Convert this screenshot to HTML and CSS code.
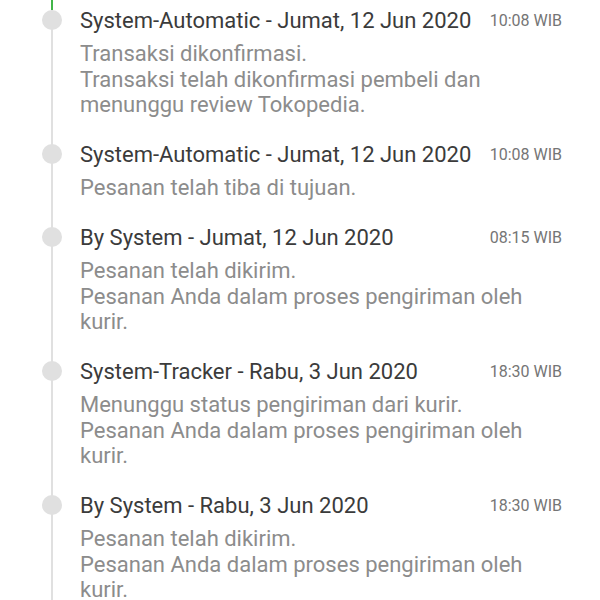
FILE: index.html
```html
<!DOCTYPE html>
<html lang="id">
<head>
  <meta charset="UTF-8">
  <meta name="viewport" content="width=device-width, initial-scale=1.0">
  <title>Riwayat Pesanan</title>
  <link rel="stylesheet" href="styles.css">
</head>
<body>

  <ul class="timeline">
    <li class="event first">
      <div class="event-head">
        <span class="event-title">System-Automatic - Jumat, 12 Jun 2020</span>
        <span class="event-time">10:08 WIB</span>
      </div>
      <p class="event-desc">Transaksi dikonfirmasi.<br>Transaksi telah dikonfirmasi pembeli dan menunggu review Tokopedia.</p>
    </li>
    <li class="event">
      <div class="event-head">
        <span class="event-title">System-Automatic - Jumat, 12 Jun 2020</span>
        <span class="event-time">10:08 WIB</span>
      </div>
      <p class="event-desc">Pesanan telah tiba di tujuan.</p>
    </li>
    <li class="event">
      <div class="event-head">
        <span class="event-title">By System - Jumat, 12 Jun 2020</span>
        <span class="event-time">08:15 WIB</span>
      </div>
      <p class="event-desc">Pesanan telah dikirim.<br>Pesanan Anda dalam proses pengiriman oleh kurir.</p>
    </li>
    <li class="event">
      <div class="event-head">
        <span class="event-title">System-Tracker - Rabu, 3 Jun 2020</span>
        <span class="event-time">18:30 WIB</span>
      </div>
      <p class="event-desc">Menunggu status pengiriman dari kurir.<br>Pesanan Anda dalam proses pengiriman oleh kurir.</p>
    </li>
    <li class="event">
      <div class="event-head">
        <span class="event-title">By System - Rabu, 3 Jun 2020</span>
        <span class="event-time">18:30 WIB</span>
      </div>
      <p class="event-desc">Pesanan telah dikirim.<br>Pesanan Anda dalam proses pengiriman oleh kurir.</p>
    </li>
  </ul>

</body>
</html>
```

FILE: styles.css
```css
body {
  margin: 0;
  padding: 0;
  font-family: Roboto, 'Noto Sans', sans-serif;
  background-color: #ffffff;
  color: #333333;
}
.timeline {
  list-style: none;
  margin: 0;
  padding: 7px 38px 0 0;
}
.event {
  position: relative;
  padding: 0 0 23.5px 80px;
}
/* rail line */
.event::before {
  content: "";
  position: absolute;
  left: 51px;
  top: 0;
  bottom: 0;
  width: 2px;
  background-color: #e0e0e0;
}
/* connector from the previous (green) step */
.event.first::after {
  content: "";
  position: absolute;
  left: 51px;
  top: -7px;
  height: 10px;
  width: 2px;
  background-color: #42b549;
}
.event-head {
  position: relative;
  display: flex;
  justify-content: space-between;
  align-items: center;
  height: 26px;
}
/* dot */
.event-head::before {
  content: "";
  position: absolute;
  left: -38px;
  top: 3px;
  width: 20px;
  height: 20px;
  border-radius: 50%;
  background-color: #e0e0e0;
  z-index: 1;
}
.event-title {
  font-size: 22px;
  color: #3b3b3b;
}
.event-time {
  font-size: 16px;
  color: #757575;
}
.event-desc {
  margin: 8px 0 0;
  font-size: 22px;
  line-height: 25.5px;
  color: #8c8c8c;
}
```
